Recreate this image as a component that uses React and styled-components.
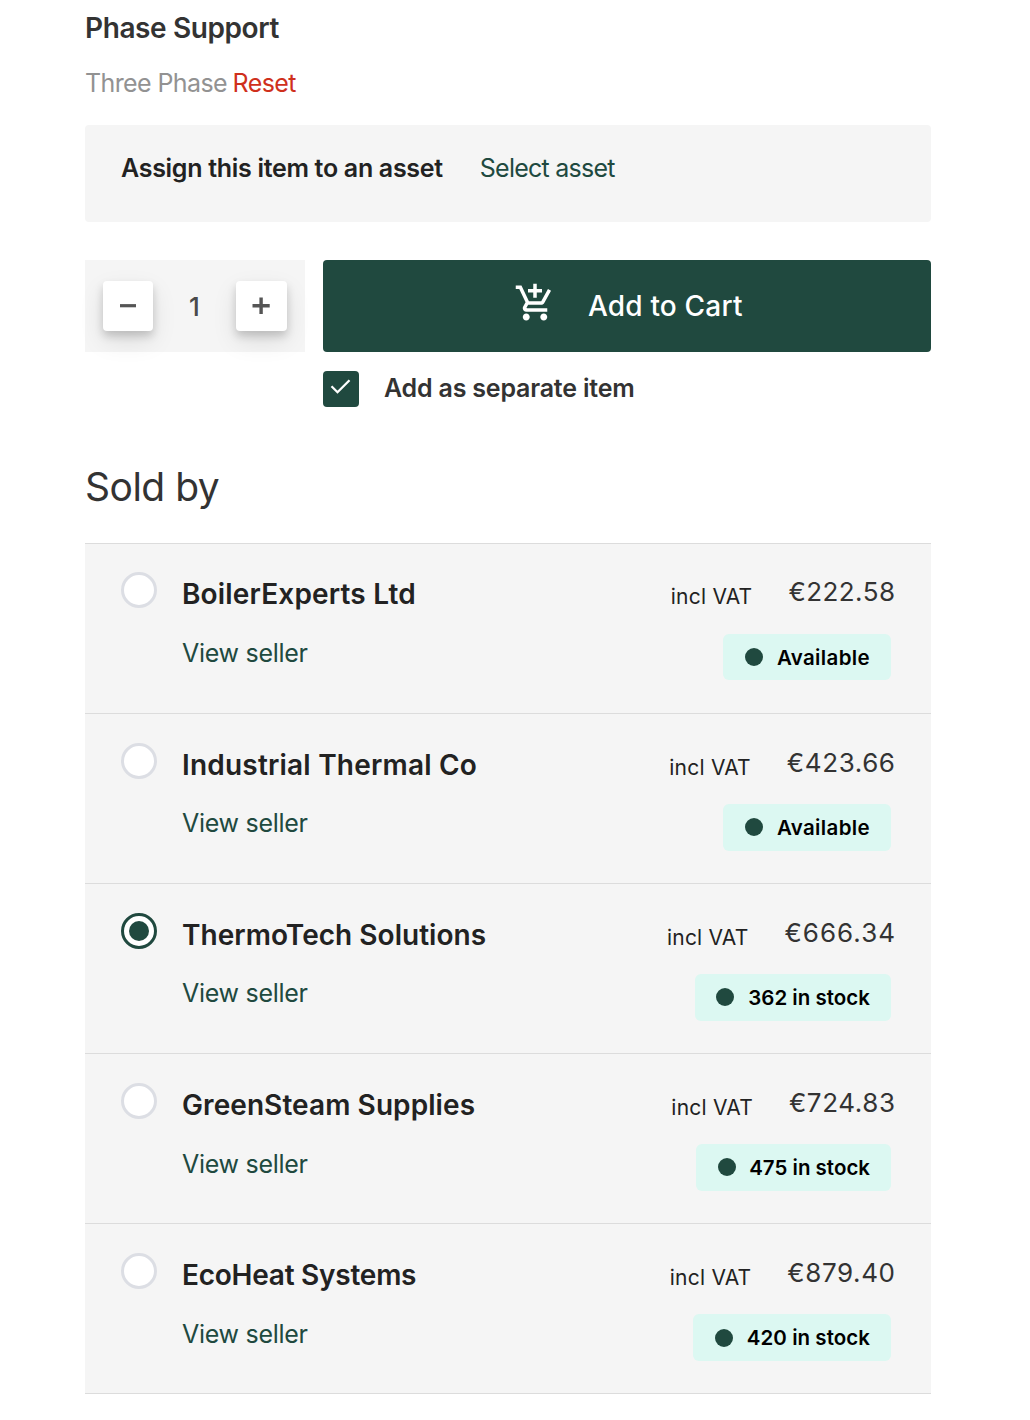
import React, { useState } from "react";
import styled, { createGlobalStyle } from "styled-components";
import { MdAddShoppingCart } from "react-icons/md";

const GREEN = "#20493f";

const GlobalStyle = createGlobalStyle`
  *, *::before, *::after { box-sizing: border-box; }
  body {
    margin: 0;
    background: #fff;
    color: #222;
    font-family: Inter, "Liberation Sans", sans-serif;
  }
  button { font-family: inherit; border: 0; padding: 0; cursor: pointer; }
`;

const Page = styled.main`
  width: 1030px;
  height: 1420px;
  padding: 8px 99px 0 85px;
  overflow: hidden;
`;

const SectionTitle = styled.h3`
  margin: 0;
  font-size: 28px;
  line-height: 41px;
  font-weight: 600;
  letter-spacing: -0.4px;
  color: #333;
`;

const Variant = styled.div`
  display: flex;
  gap: 5.5px;
  margin-top: 18px;
  font-size: 25px;
  line-height: 33px;
  letter-spacing: -0.6px;
  color: #929292;
`;

const ResetLink = styled.span`
  color: #cf301c;
`;

const AssetBar = styled.div`
  display: flex;
  gap: 37px;
  height: 97px;
  margin-top: 25px;
  padding: 23px 36px;
  border-radius: 4px;
  background: #f5f5f5;
  font-size: 25px;
  line-height: 40px;
`;

const AssetLabel = styled.span`
  font-weight: 600;
  letter-spacing: -0.3px;
`;

const AssetLink = styled.span`
  color: ${GREEN};
  letter-spacing: -0.75px;
`;

const PurchaseRow = styled.div`
  display: flex;
  gap: 18px;
  margin-top: 38px;
`;

const Stepper = styled.div`
  display: flex;
  align-items: center;
  justify-content: space-between;
  width: 220px;
  height: 92px;
  padding: 0 18px;
  background: #f5f5f5;
`;

const StepButton = styled.button`
  display: flex;
  align-items: center;
  justify-content: center;
  width: ${(p) => p.$width}px;
  height: 50px;
  border-radius: 4px;
  background: #fff;
  box-shadow: 0 5px 9px rgba(0, 0, 0, 0.17), 0 10px 24px rgba(0, 0, 0, 0.1);
`;

const Quantity = styled.span`
  padding-top: 1px;
  font-size: 26px;
  line-height: 32px;
  font-weight: 500;
  color: #4a4a4a;
`;

const CartColumn = styled.div`
  width: 608px;
`;

const CartButton = styled.button`
  display: flex;
  align-items: center;
  width: 100%;
  height: 92px;
  padding-left: 190.5px;
  gap: 32.5px;
  border-radius: 4px;
  background: ${GREEN};
  color: #fff;
  font-size: 28px;
  font-weight: 500;
  letter-spacing: 0.18px;
  svg { margin-bottom: 7px; }
`;

const CheckRow = styled.label`
  display: flex;
  gap: 25px;
  margin-top: 19px;
  font-size: 25px;
  line-height: 34px;
  font-weight: 600;
  letter-spacing: -0.2px;
  color: #333;
`;

const CheckBox = styled.span`
  width: 36px;
  height: 36px;
  border-radius: 4px;
  background: ${GREEN};
  svg { display: block; }
`;

const SoldBy = styled.h2`
  margin: 55px 0 31px;
  font-size: 39px;
  line-height: 50px;
  font-weight: 400;
  letter-spacing: -0.5px;
  color: #333;
`;

const SellerList = styled.div`
  border-bottom: 1px solid #dcdcdc;
`;

const SellerRow = styled.div`
  display: flex;
  height: 170px;
  padding: ${(p) => (p.$first ? 28 : 29)}px 36px 0;
  border-top: 1px solid #dcdcdc;
  background: #f5f5f5;
`;

const Radio = styled.span`
  flex: none;
  display: flex;
  align-items: center;
  justify-content: center;
  width: 36px;
  height: 36px;
  border: 3px solid ${(p) => (p.$checked ? GREEN : "#dcdee4")};
  border-radius: 50%;
  background: #fff;
  &::after {
    content: "";
    width: 20px;
    height: 20px;
    border-radius: 50%;
    background: ${(p) => (p.$checked ? GREEN : "transparent")};
  }
`;

const SellerInfo = styled.div`
  flex: 1;
  margin-left: 25px;
  padding-top: 2px;
`;

const SellerName = styled.div`
  font-size: 28px;
  line-height: 40px;
  font-weight: 600;
  letter-spacing: ${(p) => p.$track}px;
`;

const SellerLink = styled.div`
  margin-top: ${(p) => p.$gap}px;
  font-size: 25px;
  line-height: 38px;
  letter-spacing: -0.28px;
  color: ${GREEN};
`;

const Offer = styled.div`
  display: flex;
  flex-direction: column;
  align-items: flex-end;
`;

const PriceLine = styled.div`
  display: flex;
  gap: 36px;
  height: 40px;
`;

const Vat = styled.span`
  padding-top: 5px;
  font-size: 21px;
  line-height: 40px;
  letter-spacing: 0.22px;
`;

const Price = styled.span`
  margin-right: ${(p) => -p.$track}px;
  font-size: 26px;
  line-height: 40px;
  letter-spacing: ${(p) => p.$track}px;
  color: #333;
`;

const Stock = styled.div`
  display: flex;
  align-items: center;
  justify-content: space-between;
  width: ${(p) => p.$width}px;
  height: ${(p) => (p.$first ? 46 : 47)}px;
  margin: ${(p) => (p.$first ? 22 : 21)}px 4px 0 0;
  padding: 0 21px 0 ${(p) => p.$inset}px;
  border-radius: 6px;
  background: #dcf8f2;
  color: #000;
  font-size: 20.5px;
  font-weight: 600;
  letter-spacing: ${(p) => p.$track}px;
  &::before {
    content: "";
    width: 18px;
    height: 18px;
    margin-bottom: ${(p) => p.$lift}px;
    border-radius: 50%;
    background: ${GREEN};
  }
`;

const SELLERS = [
  { name: "BoilerExperts Ltd", price: "€222.58", stock: "Available", width: 168, inset: 22, lift: 0, gap: 20, track: 0.16, priceTrack: 0.45, stockTrack: 0.35 },
  { name: "Industrial Thermal Co", price: "€423.66", stock: "Available", width: 168, inset: 22, lift: 1, gap: 19, track: 0.2, priceTrack: 0.6, stockTrack: 0.35 },
  { name: "ThermoTech Solutions", price: "€666.34", stock: "362 in stock", width: 196, inset: 21, lift: 1, gap: 19, track: 0.03, priceTrack: 1, stockTrack: 0.02 },
  { name: "GreenSteam Supplies", price: "€724.83", stock: "475 in stock", width: 195, inset: 22, lift: 1, gap: 20, track: 0.08, priceTrack: 0.6, stockTrack: 0 },
  { name: "EcoHeat Systems", price: "€879.40", stock: "420 in stock", width: 198, inset: 22, lift: 0, gap: 20, track: -0.24, priceTrack: 0.6, stockTrack: 0.05 },
];

export default function App() {
  const [selected, setSelected] = useState(2);
  return (
    <>
      <GlobalStyle />
      <Page>
        <SectionTitle>Phase Support</SectionTitle>
        <Variant>
          <span>Three Phase</span>
          <ResetLink>Reset</ResetLink>
        </Variant>
        <AssetBar>
          <AssetLabel>Assign this item to an asset</AssetLabel>
          <AssetLink>Select asset</AssetLink>
        </AssetBar>
        <PurchaseRow>
          <Stepper>
            <StepButton $width={50} aria-label="Decrease">
              <svg width="18" height="18" viewBox="0 0 18 18"><path d="M1 8.700h16" stroke="#555" strokeWidth="3.2" /></svg>
            </StepButton>
            <Quantity>1</Quantity>
            <StepButton $width={51} aria-label="Increase">
              <svg width="18" height="18" viewBox="0 0 18 18"><path d="M.5 8.700h17.200M9.100 .5v16.400" stroke="#555" strokeWidth="3.4" /></svg>
            </StepButton>
          </Stepper>
          <CartColumn>
            <CartButton>
              <MdAddShoppingCart size={42} />
              <span>Add to Cart</span>
            </CartButton>
            <CheckRow>
              <CheckBox>
                <svg width="36" height="36" viewBox="0 0 36 36"><path d="M8.5 15.2l6 6L26.500 9.200" fill="none" stroke="#fff" strokeWidth="2.300" /></svg>
              </CheckBox>
              <span>Add as separate item</span>
            </CheckRow>
          </CartColumn>
        </PurchaseRow>
        <SoldBy>Sold by</SoldBy>
        <SellerList>
          {SELLERS.map((s, i) => (
            <SellerRow key={s.name} $first={i === 0} onClick={() => setSelected(i)}>
              <Radio $checked={i === selected} />
              <SellerInfo>
                <SellerName $track={s.track}>{s.name}</SellerName>
                <SellerLink $gap={s.gap}>View seller</SellerLink>
              </SellerInfo>
              <Offer>
                <PriceLine>
                  <Vat>incl VAT</Vat>
                  <Price $track={s.priceTrack}>{s.price}</Price>
                </PriceLine>
                <Stock $width={s.width} $inset={s.inset} $lift={s.lift} $track={s.stockTrack} $first={i === 0}>
                  {s.stock}
                </Stock>
              </Offer>
            </SellerRow>
          ))}
        </SellerList>
      </Page>
    </>
  );
}
